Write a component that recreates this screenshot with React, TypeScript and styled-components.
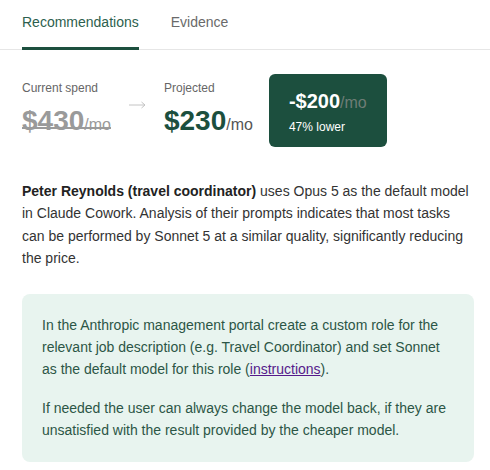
import React from "react";
import styled, { createGlobalStyle } from "styled-components";

const Global = createGlobalStyle`
  html, body { margin: 0; padding: 0; background: #ffffff; }
  body { font-family: "Liberation Sans", Arial, Helvetica, sans-serif; }
`;

const Page = styled.div`
  width: 490px;
  box-sizing: border-box;
`;

const TabBar = styled.div`
  display: flex;
  gap: 32px;
  padding: 0 22px;
  border-bottom: 1px solid #e6e6e6;
`;

const Tab = styled.div<{ $active?: boolean }>`
  font-size: 14px;
  line-height: 16px;
  padding: 14px 0 17px;
  margin-bottom: -1px;
  border-bottom: 3px solid ${(p) => (p.$active ? "#1c4f3e" : "transparent")};
  color: ${(p) => (p.$active ? "#2d5f4e" : "#6a6a6a")};
  cursor: pointer;
`;

const Content = styled.div`
  padding: 24px 16px 0 22px;
`;

const MetricsRow = styled.div`
  display: flex;
  align-items: center;
  gap: 16px;
`;

const Metric = styled.div`
  display: flex;
  flex-direction: column;
  align-items: flex-start;
  gap: 10px;
`;

const Label = styled.div`
  font-size: 12px;
  color: #666;
`;

const Amount = styled.div<{ $struck?: boolean }>`
  position: relative;
  font-size: 28px;
  font-weight: 700;
  line-height: 32px;
  color: ${(p) => (p.$struck ? "#9a9a9a" : "#1c4f3e")};
  &::after {
    content: "";
    display: ${(p) => (p.$struck ? "block" : "none")};
    position: absolute;
    left: 0;
    right: 0;
    top: 22px;
    height: 2px;
    background: #9a9a9a;
  }
`;

const Unit = styled.span<{ $color: string }>`
  font-size: 16px;
  font-weight: 400;
  color: ${(p) => p.$color};
`;

const Arrow = styled.svg`
  display: block;
  margin: -12px 2px 0;
  flex: none;
`;

const SavingsCard = styled.div`
  background: #1c4f3e;
  border-radius: 6px;
  padding: 16px 20px 13px;
  display: flex;
  flex-direction: column;
  gap: 6px;
`;

const Savings = styled.div`
  font-size: 20px;
  font-weight: 700;
  color: #ffffff;
  line-height: 23px;
`;

const SavingsNote = styled.div`
  font-size: 12px;
  color: #ffffff;
  line-height: 14px;
`;

const Description = styled.p`
  margin: 33px 0 0;
  font-size: 14px;
  line-height: 22.4px;
  color: #333333;
  strong { color: #222222; font-weight: 700; }
`;

const Advice = styled.div`
  margin-top: 24px;
  background: #e8f4ef;
  border-radius: 8px;
  padding: 20px;
  color: #2c5646;
  font-size: 14px;
  line-height: 22.4px;
  p { margin: 0; }
  p + p { margin-top: 16px; }
  a { color: #551a8b; text-decoration: underline; }
`;

export default function App() {
  return (
    <Page>
      <Global />
      <TabBar>
        <Tab $active>Recommendations</Tab>
        <Tab>Evidence</Tab>
      </TabBar>
      <Content>
        <MetricsRow>
          <Metric>
            <Label>Current spend</Label>
            <Amount $struck>
              $430<Unit $color="#9a9a9a">/mo</Unit>
            </Amount>
          </Metric>
          <Arrow width="17" height="8" viewBox="0 0 17 8" aria-hidden="true">
            <path d="M0 4H16M12.5 1L16 4L12.5 7" fill="none" stroke="#c4c4c4" strokeWidth="1" />
          </Arrow>
          <Metric>
            <Label>Projected</Label>
            <Amount>
              $230<Unit $color="#555555">/mo</Unit>
            </Amount>
          </Metric>
          <SavingsCard>
            <Savings>
              -$200<Unit $color="#6e7d76">/mo</Unit>
            </Savings>
            <SavingsNote>47% lower</SavingsNote>
          </SavingsCard>
        </MetricsRow>
        <Description>
          <strong>Peter Reynolds (travel coordinator)</strong> uses Opus 5 as the default
          model in Claude Cowork. Analysis of their prompts indicates that most tasks can be
          performed by Sonnet 5 at a similar quality, significantly reducing the price.
        </Description>
        <Advice>
          <p>
            In the Anthropic management portal create a custom role for the relevant job
            description (e.g. Travel Coordinator) and set Sonnet as the default model for this
            role (<a href="#">instructions</a>).
          </p>
          <p>
            If needed the user can always change the model back, if they are unsatisfied with
            the result provided by the cheaper model.
          </p>
        </Advice>
      </Content>
    </Page>
  );
}
